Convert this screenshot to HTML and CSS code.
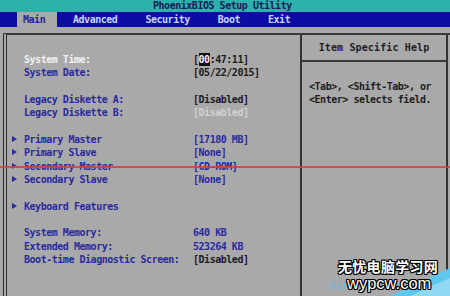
FILE: index.html
```html
<!DOCTYPE html>
<html>
<head>
    <title>PhoenixBIOS Setup Utility</title>
    <link rel="stylesheet" href="styles.css">
</head>
<body>
    <div class="title">PhoenixBIOS Setup Utility</div>
    <div class="menu">
        <span class="tab active">Main</span>
        <span class="tab first">Advanced</span>
        <span class="tab">Security</span>
        <span class="tab">Boot</span>
        <span class="tab">Exit</span>
    </div>

    <div class="screen">
        <div class="frame">
            <div class="panel">
                <div class="group">
                    <div class="row"><span></span><span class="label selected">System Time:</span><span class="value dark">[<b class="cursor">00</b>:47:11]</span></div>
                    <div class="row"><span></span><span class="label">System Date:</span><span class="value dark">[05/22/2015]</span></div>
                </div>
                <div class="group">
                    <div class="row"><span></span><span class="label">Legacy Diskette A:</span><span class="value dark">[Disabled]</span></div>
                    <div class="row"><span></span><span class="label">Legacy Diskette B:</span><span class="value off">[Disabled]</span></div>
                </div>
                <div class="group">
                    <div class="row"><span class="arrow"></span><span class="label">Primary Master</span><span class="value">[17180 MB]</span></div>
                    <div class="row"><span class="arrow"></span><span class="label">Primary Slave</span><span class="value">[None]</span></div>
                    <div class="row"><span class="arrow"></span><span class="label">Secondary Master</span><span class="value">[CD-ROM]</span></div>
                    <div class="row"><span class="arrow"></span><span class="label">Secondary Slave</span><span class="value">[None]</span></div>
                </div>
                <div class="group">
                    <div class="row"><span class="arrow"></span><span class="label">Keyboard Features</span><span></span></div>
                </div>
                <div class="group">
                    <div class="row"><span></span><span class="label">System Memory:</span><span class="value">640 KB</span></div>
                    <div class="row"><span></span><span class="label">Extended Memory:</span><span class="value">523264 KB</span></div>
                    <div class="row"><span></span><span class="label">Boot-time Diagnostic Screen:</span><span class="value dark">[Disabled]</span></div>
                </div>
            </div>

            <div class="help">
                <div class="help-head">Item Specific Help</div>
                <div class="help-body">
                    &lt;Tab&gt;, &lt;Shift-Tab&gt;, or<br>
                    &lt;Enter&gt; selects field.
                </div>
            </div>
        </div>
    </div>

    <div class="scanline"></div>

    <div class="watermark">
        <svg class="wm-corner" width="60" height="30" viewBox="0 0 60 30">
            <polygon points="0,30 60,2 60,30" fill="#5fc6ee"/>
            <polygon points="20,30 60,12 60,30" fill="#8ed8f4"/>
        </svg>
        <span class="wm-faint">XU</span>
        <div class="wm-cn">无忧电脑学习网</div>
        <div class="wm-en">wypcw.com</div>
    </div>
</body>
</html>
```

FILE: styles.css
```css
body {
    margin: 0;
    width: 450px;
    height: 296px;
    overflow: hidden;
    position: relative;
    background-color: #a9a9a9;
    font-family: 'DejaVu Sans Mono', 'Liberation Mono', monospace;
    font-size: 10px;
    font-weight: bold;
    letter-spacing: -0.47px;
}

.title {
    height: 12px;
    line-height: 12px;
    padding-left: 153px;
    background-color: #2cb2aa;
    color: #1b1b5a;
}

.menu {
    display: flex;
    gap: 28px;
    height: 15px;
    line-height: 15px;
    padding-left: 17px;
    background-color: #0d0da6;
    color: #c9d3fb;
}

.tab.active {
    width: 40px;
    box-sizing: border-box;
    padding-left: 6px;
    background-color: #a9a9a9;
    color: #23239a;
}

.tab.first {
    margin-left: -12px;
}

.screen {
    padding-top: 6px;
}

.frame {
    display: grid;
    grid-template-columns: 293px 148px;
    height: 263px;
    margin-left: 3px;
    border-left: 4px double #2c2c2c;
    border-top: 2px solid #3a3a3a;
}

.panel {
    padding-top: 18px;
    line-height: 13.35px;
}

.group + .group {
    margin-top: 13.35px;
}

.row {
    display: grid;
    grid-template-columns: 12px 169px 1fr;
    padding-left: 5px;
    white-space: pre;
}

.label {
    color: #2a2a9e;
}

.label.selected {
    color: #f2f2f2;
}

.value {
    color: #2a2a9e;
}

.value.dark {
    color: #1c1c1c;
}

.value.off {
    color: #d2d2d2;
}

.cursor {
    background-color: #111;
    color: #f2f2f2;
    padding: 1px 0;
}

.arrow {
    width: 0;
    height: 0;
    margin-top: 3px;
    border-left: 5px solid #2a2a9e;
    border-top: 3.5px solid transparent;
    border-bottom: 3.5px solid transparent;
}

.help {
    border-left: 2px solid #333;
    border-right: 2px solid #333;
    color: #1e1e1e;
}

.help-head {
    height: 25px;
    line-height: 25px;
    text-align: center;
    letter-spacing: 0.13px;
    border-bottom: 2px solid #3a3a3a;
}

.help-body {
    padding: 18px 0 0 7px;
    line-height: 13.35px;
}

.scanline {
    position: absolute;
    left: 0;
    top: 166px;
    width: 450px;
    height: 2px;
    background-color: rgba(220, 60, 60, 0.85);
}

.watermark {
    position: absolute;
    left: 326px;
    top: 258px;
    width: 124px;
    height: 38px;
    font-family: 'Noto Sans CJK SC', 'Liberation Sans', sans-serif;
    letter-spacing: 0;
}

.wm-corner {
    position: absolute;
    right: 0;
    bottom: 0;
}

.wm-faint {
    position: absolute;
    left: 2px;
    top: 20px;
    font-family: 'Liberation Sans', sans-serif;
    font-size: 13px;
    color: #7fb4d4;
    opacity: 0.8;
}

.wm-cn, .wm-en {
    position: relative;
    color: #fff;
    text-shadow: 1px 0 0 #000, -1px 0 0 #000, 0 1px 0 #000, 0 -1px 0 #000,
                 1px 1px 0 #000, -1px -1px 0 #000, 1px -1px 0 #000, -1px 1px 0 #000;
}

.wm-cn {
    padding-left: 12px;
    font-size: 14px;
    line-height: 17px;
    letter-spacing: 0.3px;
}

.wm-en {
    padding-left: 21px;
    font-family: 'Liberation Sans', sans-serif;
    font-size: 16.5px;
    font-weight: normal;
    line-height: 16px;
}
```
